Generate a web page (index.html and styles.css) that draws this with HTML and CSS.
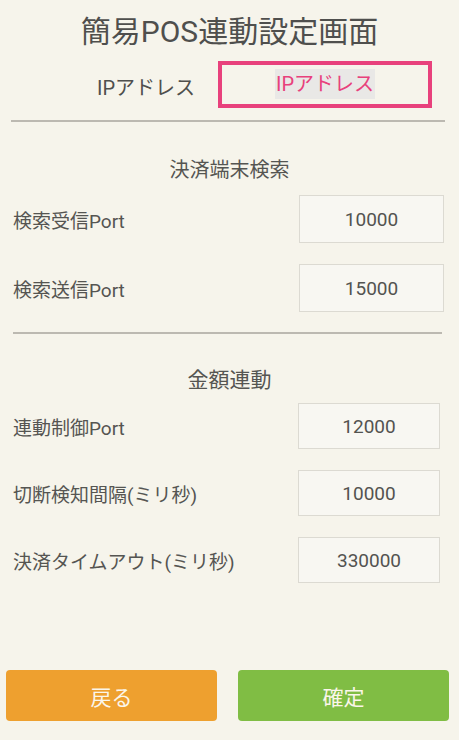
FILE: index.html
```html
<!DOCTYPE html>
<html lang="ja">
<head>
<meta charset="utf-8">
<title>簡易POS連動設定画面</title>
<link rel="stylesheet" href="styles.css">
</head>
<body>
<div class="screen">
  <h1 class="title">簡易POS連動設定画面</h1>
  <div class="tabs">
    <div class="tab">IPアドレス</div>
    <div class="tab tab-active"><span class="tab-label">IPアドレス</span></div>
  </div>
  <div class="divider divider-top"></div>

  <h2 class="section">決済端末検索</h2>
  <div class="row row-a first">
    <span class="label">検索受信Port</span>
    <span class="field">10000</span>
  </div>
  <div class="row row-a">
    <span class="label">検索送信Port</span>
    <span class="field">15000</span>
  </div>
  <div class="divider divider-mid"></div>

  <h2 class="section section-b">金額連動</h2>
  <div class="row row-b first">
    <span class="label">連動制御Port</span>
    <span class="field">12000</span>
  </div>
  <div class="row row-b">
    <span class="label">切断検知間隔(ミリ秒)</span>
    <span class="field">10000</span>
  </div>
  <div class="row row-b">
    <span class="label">決済タイムアウト(ミリ秒)</span>
    <span class="field">330000</span>
  </div>

  <div class="footer">
    <div class="btn btn-back">戻る</div>
    <div class="btn btn-ok">確定</div>
  </div>
</div>
</body>
</html>
```
FILE: styles.css
```css
* { box-sizing: border-box; }
html, body {
  margin: 0;
  padding: 0;
  background: #f6f4eb;
}
body {
  font-family: Roboto, "Noto Sans CJK JP", sans-serif;
  color: #555552;
}
.screen {
  display: flex;
  flex-direction: column;
  height: 740px;
}
.title {
  margin: 0;
  padding-top: 12px;
  font-size: 30px;
  line-height: 40px;
  font-weight: 400;
  text-align: center;
  color: #4f4f4d;
}
.tabs {
  display: flex;
  margin-top: 9px;
  padding-left: 74px;
  height: 47px;
}
.tab {
  width: 144px;
  display: flex;
  align-items: center;
  justify-content: center;
  font-size: 20px;
  color: #4f4f4d;
  padding-top: 3px;
}
.tab-active {
  width: 214px;
  border: 4px solid #e8417c;
  color: #e8417c;
  padding-top: 0;
  padding-bottom: 2px;
}
.tab-label {
  background: #e9e8e6;
  line-height: 30px;
  padding: 0 1px;
}
.divider {
  height: 2px;
  background: #bcb9b1;
}
.divider-top {
  margin: 12px 14px 0 11px;
}
.divider-mid {
  margin: 20px 17px 0 13px;
}
.section {
  margin: 33px 0 0;
  font-size: 20px;
  line-height: 30px;
  font-weight: 400;
  text-align: center;
}
.section-b {
  margin-top: 31px;
  font-size: 21px;
}
.row {
  display: flex;
  align-items: center;
  justify-content: space-between;
  padding-left: 13px;
  margin-top: 21px;
}
.row.first { margin-top: 10px; }
.row-b.first { margin-top: 8px; }
.row-a { padding-right: 15px; }
.row-b { padding-right: 19px; }
.label {
  font-size: 19px;
}
.field {
  display: flex;
  align-items: center;
  justify-content: center;
  border: 1px solid #dcdad2;
  background: #f8f7f2;
  font-size: 19px;
  color: #535350;
}
.row-a .field { width: 145px; height: 48px; }
.row-b .field { width: 142px; height: 46px; }
.footer {
  margin-top: auto;
  display: flex;
  gap: 21px;
  padding: 0 10px 19px 6px;
}
.btn {
  flex: 1;
  height: 51px;
  border-radius: 4px;
  display: flex;
  align-items: center;
  justify-content: center;
  font-size: 21px;
  color: #fbf6ea;
}
.btn-back { background: #eea02f; }
.btn-ok { background: #80bd44; }
```
